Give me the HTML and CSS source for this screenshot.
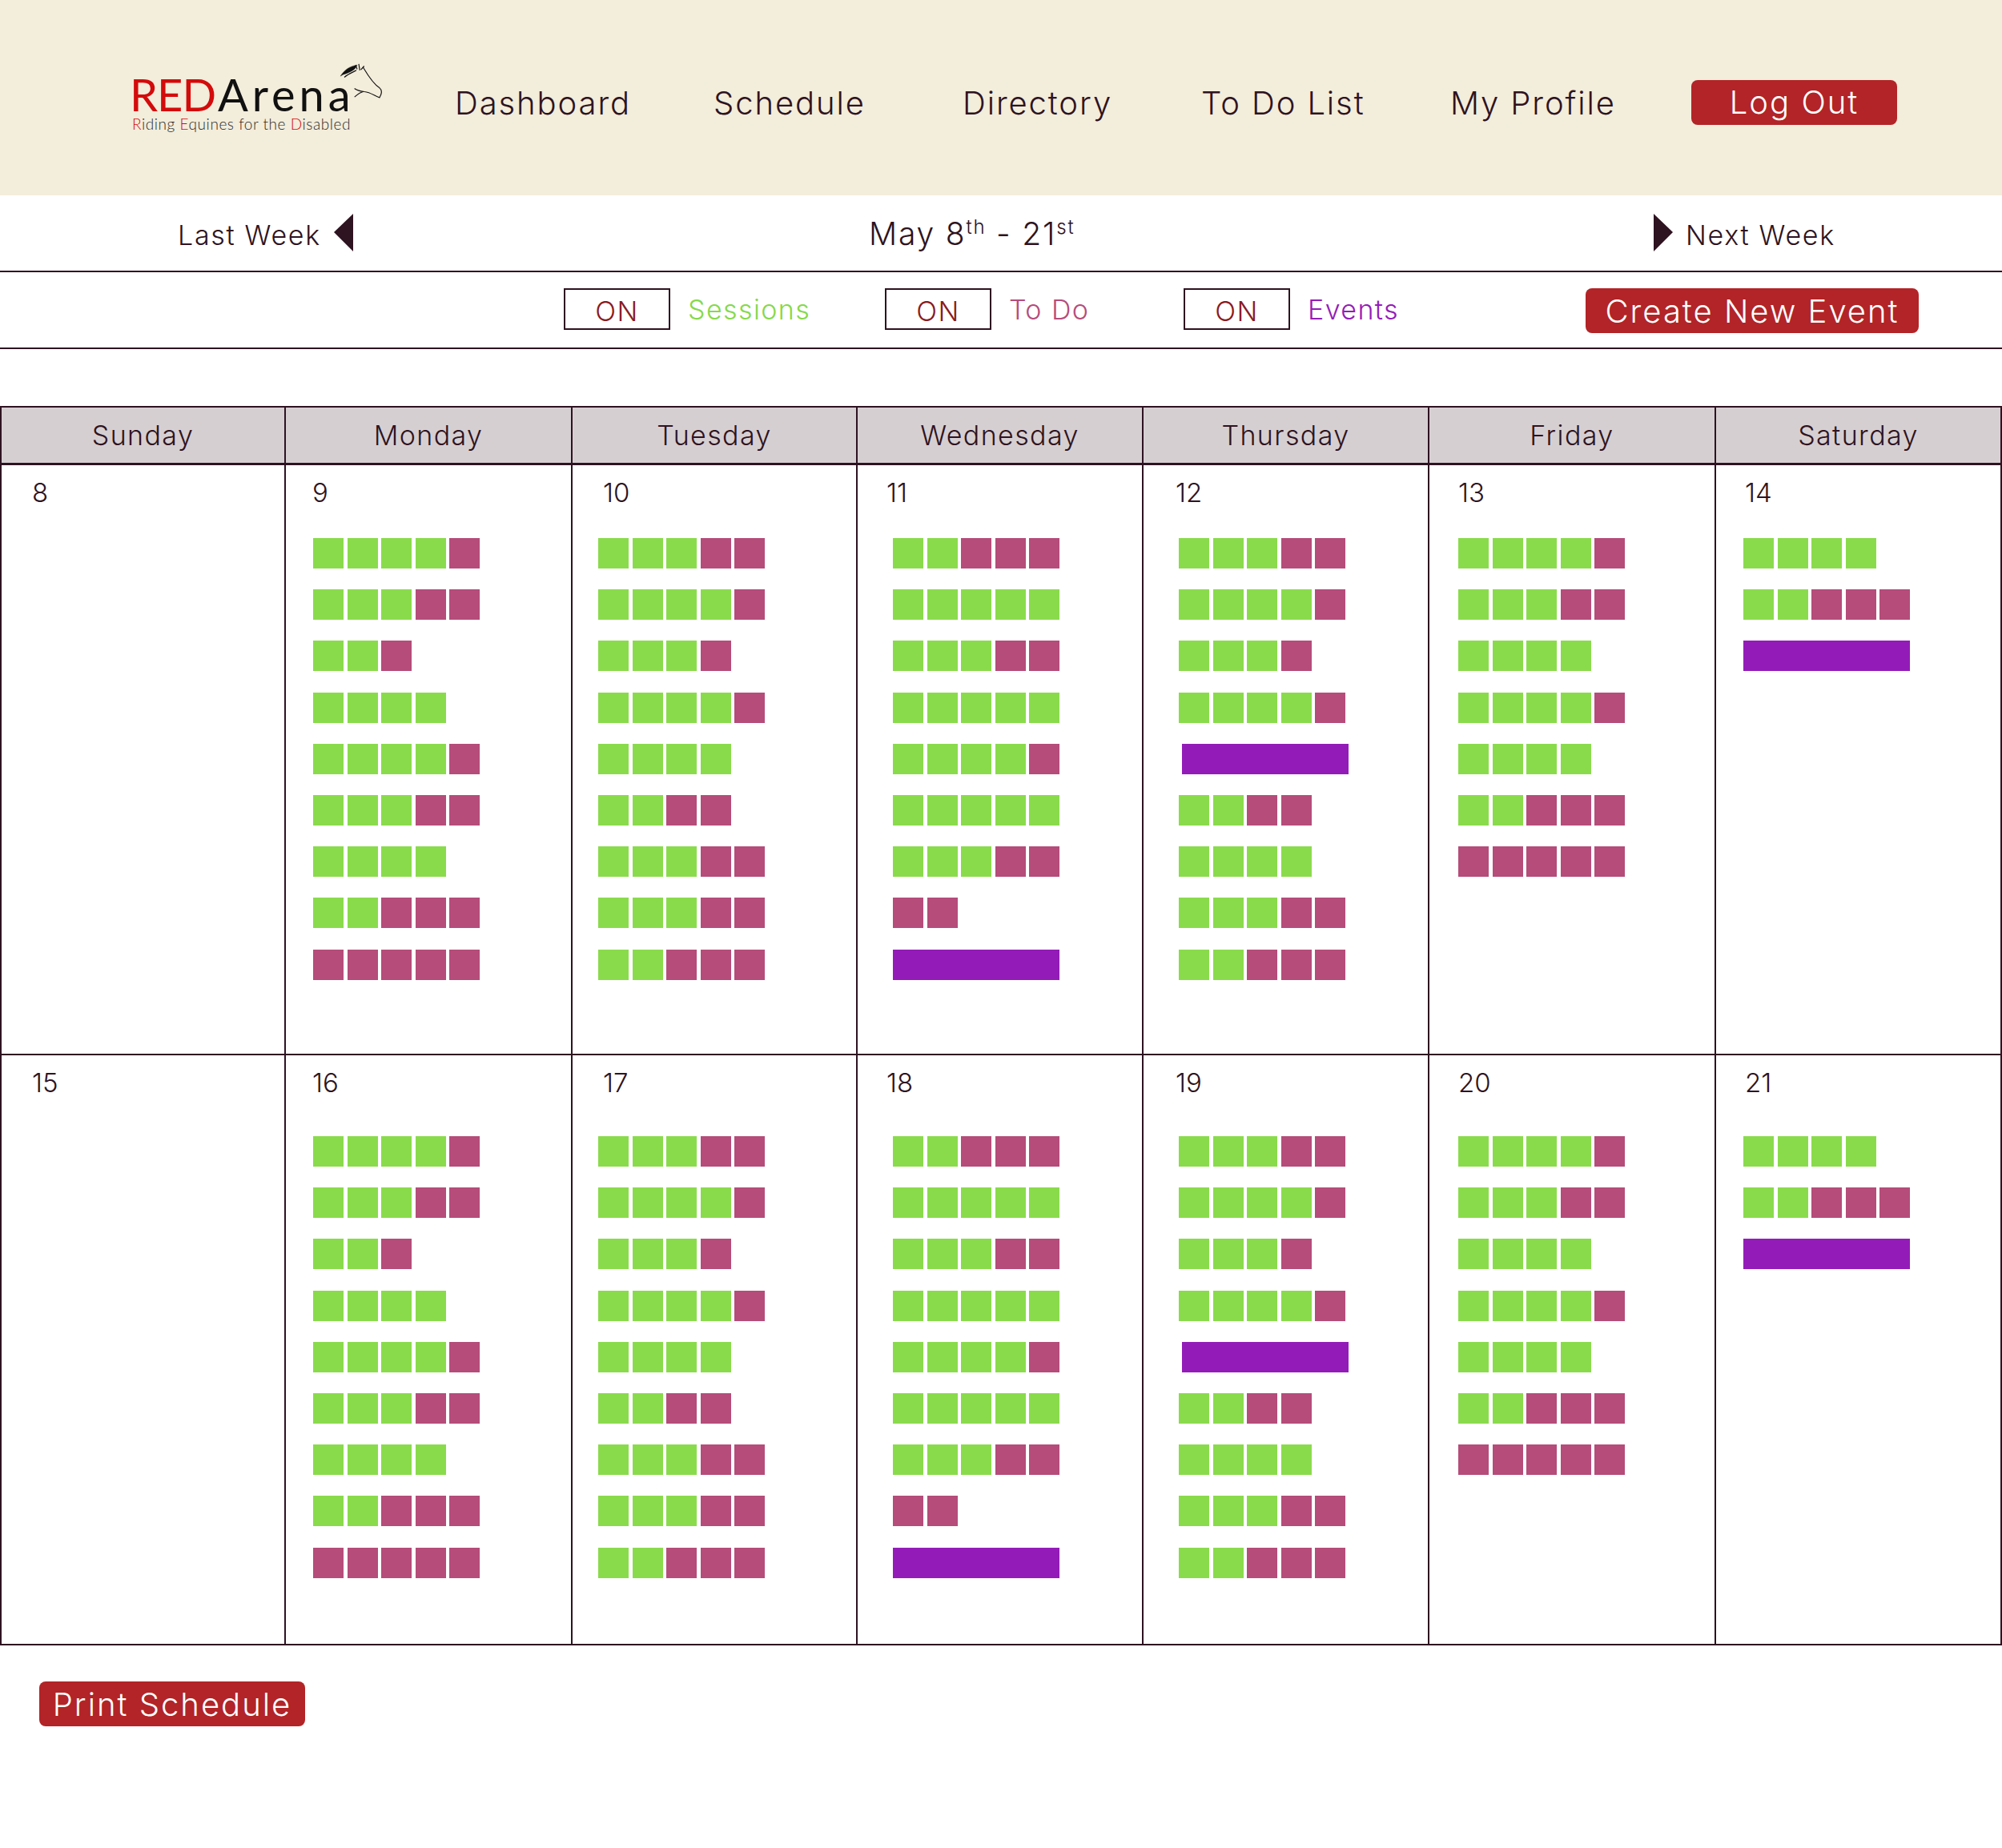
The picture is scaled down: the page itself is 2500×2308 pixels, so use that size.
FILE: index.html
```html
<!DOCTYPE html>
<html lang="en">
<head>
    <meta charset="UTF-8">
    <title>RED Arena - Schedule</title>
    <link rel="stylesheet" href="styles.css">
</head>
<body>

    <header class="topbar">
        <div class="logo">
            <div class="logo-name"><span class="red">RED</span><span class="logo-arena">Arena</span></div>
            <div class="logo-tag"><span class="red">R</span>iding <span class="red">E</span>quines for the <span class="red">D</span>isabled</div>
            <svg class="logo-horse" viewBox="900 80 180 140" fill="none" stroke="#111" stroke-width="3.5">
                <path d="M1000 100 C1015 125 1035 160 1062 178 C1072 186 1070 200 1062 214 C1045 210 1030 194 1005 192 C990 190 975 186 968 180"/>
                <path d="M968 212 C978 204 985 196 1000 192"/>
                <path d="M984 88 L988 112 M972 92 L978 108 M1004 96 L992 110"/>
                <path d="M915 134 C930 110 950 96 978 92 C972 112 945 122 925 128 Z" fill="#111" stroke-width="1"/>
                <path d="M930 138 C945 125 960 120 975 112"/>
            </svg>
        </div>
        <a class="nav-link">Dashboard</a>
        <a class="nav-link">Schedule</a>
        <a class="nav-link">Directory</a>
        <a class="nav-link">To Do List</a>
        <a class="nav-link">My Profile</a>
        <a class="btn btn-logout">Log Out</a>
    </header>

    <div class="week-nav">
        <div class="week-link">
            <span>Last Week</span>
            <svg class="arrow" viewBox="0 0 24 47"><polygon points="0,23 24,0 24,47"/></svg>
        </div>
        <div class="week-title">May 8<sup>th</sup> - 21<sup>st</sup></div>
        <div class="week-link">
            <svg class="arrow" viewBox="0 0 24 47"><polygon points="24,23 0,0 0,47"/></svg>
            <span>Next Week</span>
        </div>
    </div>

    <div class="filters">
        <div class="filter"><span class="toggle">ON</span><span class="sessions">Sessions</span></div>
        <div class="filter"><span class="toggle">ON</span><span class="todo">To Do</span></div>
        <div class="filter"><span class="toggle">ON</span><span class="events">Events</span></div>
        <a class="btn btn-create">Create New Event</a>
    </div>

    <div class="calendar" id="calendar">
        <div class="day-head">Sunday</div>
        <div class="day-head">Monday</div>
        <div class="day-head">Tuesday</div>
        <div class="day-head">Wednesday</div>
        <div class="day-head">Thursday</div>
        <div class="day-head">Friday</div>
        <div class="day-head">Saturday</div>
    </div>

    <div class="footer">
        <a class="btn btn-print">Print Schedule</a>
    </div>

    <script>
        // g = session, t = to do, E = event bar
        var week = [
            [],
            ['ggggt','gggtt','ggt','gggg','ggggt','gggtt','gggg','ggttt','ttttt'],
            ['gggtt','ggggt','gggt','ggggt','gggg','ggtt','gggtt','gggtt','ggttt'],
            ['ggttt','ggggg','gggtt','ggggg','ggggt','ggggg','gggtt','tt','E'],
            ['gggtt','ggggt','gggt','ggggt','E','ggtt','gggg','gggtt','ggttt'],
            ['ggggt','gggtt','gggg','ggggt','gggg','ggttt','ttttt'],
            ['gggg','ggttt','E']
        ];
        var cols = ['sun','mon','tue','wed','thu','fri','sat'];
        var calendar = document.querySelector('#calendar');

        function addWeek(first, rowClass){
            for(var d=0; d<7; d++){
                var cell = document.createElement('div');
                cell.className = 'day ' + cols[d] + ' ' + rowClass;
                var num = document.createElement('div');
                num.className = 'day-num';
                num.textContent = first + d;
                cell.appendChild(num);
                var slots = document.createElement('div');
                slots.className = 'slots';
                for(var r=0; r<week[d].length; r++){
                    var row = document.createElement('div');
                    row.className = 'slot-row';
                    var items = week[d][r];
                    for(var i=0; i<items.length; i++){
                        var s = document.createElement('span');
                        s.className = 'slot slot-' + items[i];
                        row.appendChild(s);
                    }
                    slots.appendChild(row);
                }
                cell.appendChild(slots);
                calendar.appendChild(cell);
            }
        }

        addWeek(8, 'week1');
        addWeek(15, 'week2');
    </script>

</body>
</html>
```

FILE: styles.css
```css
*{
    box-sizing: border-box;
}
body{
    margin: 0;
    width: 2500px;
    height: 2308px;
    overflow: hidden;
    background: #fff;
    color: #2e1320;
    font-family: "Inter", "Liberation Sans", sans-serif;
    font-weight: 300;
}

/* header */
.topbar{
    height: 244px;
    background: #f3eddb;
    display: grid;
    grid-template-columns: 403px 323px 311px 298px 311px 301px 257px;
    align-items: center;
    padding: 12px 0 0 165px;
}
.nav-link{
    font-size: 40px;
    letter-spacing: 1.9px;
    color: #2e1320;
}
.logo{
    position: relative;
    height: 100px;
    margin-left: -3px;
}
.logo-name{
    font-family: "Lato", sans-serif;
    font-weight: 400;
    font-size: 56px;
    line-height: 58px;
    color: #111;
    margin-top: 11px;
    letter-spacing: -1px;
    white-space: nowrap;
}
.logo-arena{
    letter-spacing: 5px;
    margin-left: 3px;
}
.logo-tag{
    font-family: "Lato", sans-serif;
    font-weight: 300;
    font-size: 19px;
    line-height: 22px;
    margin: -3px 0 0 3px;
    color: #2a2a2a;
    letter-spacing: 0.55px;
    white-space: nowrap;
}
.red{
    color: #d40b0b;
}
.logo-horse{
    position: absolute;
    left: 258px;
    top: -1px;
    width: 60px;
    height: 47px;
}
.btn{
    display: flex;
    align-items: center;
    justify-content: center;
    height: 56px;
    background: #b22427;
    color: #fff;
    border-radius: 8px;
    font-size: 40px;
    letter-spacing: 2px;
}
.btn-logout{
    margin-top: -1px;
}

/* week switcher */
.week-nav{
    height: 96px;
    border-bottom: 2px solid #2e1320;
    display: grid;
    grid-template-columns: 863px 980px 1fr;
    align-items: center;
    padding-left: 222px;
}
.week-link{
    display: flex;
    align-items: center;
    gap: 16px;
    font-size: 34px;
    letter-spacing: 1.7px;
    margin-top: -1px;
}
.week-link span{
    padding-top: 5px;
}
.arrow{
    width: 24px;
    height: 47px;
    fill: #2e1320;
}
.week-title{
    font-size: 39px;
    letter-spacing: 1.8px;
}
.week-title sup{
    font-size: 24px;
    line-height: 0;
}

/* filters */
.filters{
    height: 96px;
    border-bottom: 2px solid #2e1320;
    display: grid;
    grid-template-columns: 401px 373px 502px 416px;
    align-items: center;
    padding-left: 704px;
}
.filter{
    display: flex;
    align-items: center;
    gap: 22px;
    font-size: 34px;
    letter-spacing: 1.4px;
    margin-top: -2px;
}
.toggle{
    width: 133px;
    height: 52px;
    border: 2px solid #2e1320;
    color: #8a1a1e;
    display: flex;
    align-items: center;
    justify-content: center;
    padding-top: 4px;
}
.sessions{
    color: #85d94a;
}
.todo{
    color: #b54c7a;
}
.events{
    color: #931cb8;
}

/* calendar */
.calendar{
    margin-top: 71px;
    display: grid;
    grid-template-columns: 355px 358px 356px 357px 357px 358px 357px;
    grid-template-rows: 72px 737px 737px;
    border-top: 2px solid #2e1320;
    border-left: 2px solid #2e1320;
}
.day-head{
    background: #d6cfd2;
    border-right: 2px solid #2e1320;
    border-bottom: 3px solid #2e1320;
    display: flex;
    align-items: center;
    justify-content: center;
    font-size: 34px;
    letter-spacing: 1.4px;
}
.day{
    border-right: 2px solid #2e1320;
    border-bottom: 2px solid #2e1320;
}
.day-num{
    font-size: 33px;
    line-height: 40px;
    margin-top: 14px;
}
.slots{
    display: flex;
    flex-direction: column;
    gap: 26.2px;
    margin-top: 37px;
}
.week2 .slots{
    margin-top: 47px;
}
.slot-row{
    display: flex;
    gap: 4.6px;
    height: 38px;
}
.slot{
    width: 38px;
    height: 38px;
}
.slot-g{
    background: #8adb4c;
}
.slot-t{
    background: #b54c7a;
}
.slot-E{
    width: 208px;
    background: #931cb8;
}

/* per column offsets, the columns were not laid out evenly */
.sun .day-num{ margin-left: 38px; }
.mon .day-num{ margin-left: 33px; }
.tue .day-num{ margin-left: 38px; }
.wed .day-num{ margin-left: 36px; }
.thu .day-num{ margin-left: 40px; }
.fri .day-num{ margin-left: 36px; }
.sat .day-num{ margin-left: 36px; }
.mon .slots{ margin-left: 34px; }
.tue .slots{ margin-left: 32px; }
.wed .slots{ margin-left: 44px; }
.thu .slots{ margin-left: 44px; }
.thu .slot-E{ margin-left: 4px; }
.fri .slots{ margin-left: 36px; }
.sat .slots{ margin-left: 34px; }

/* footer */
.footer{
    padding: 45px 0 0 49px;
}
.btn-print{
    width: 332px;
}
.btn-create{
    width: 416px;
    margin-top: 2px;
}
```
